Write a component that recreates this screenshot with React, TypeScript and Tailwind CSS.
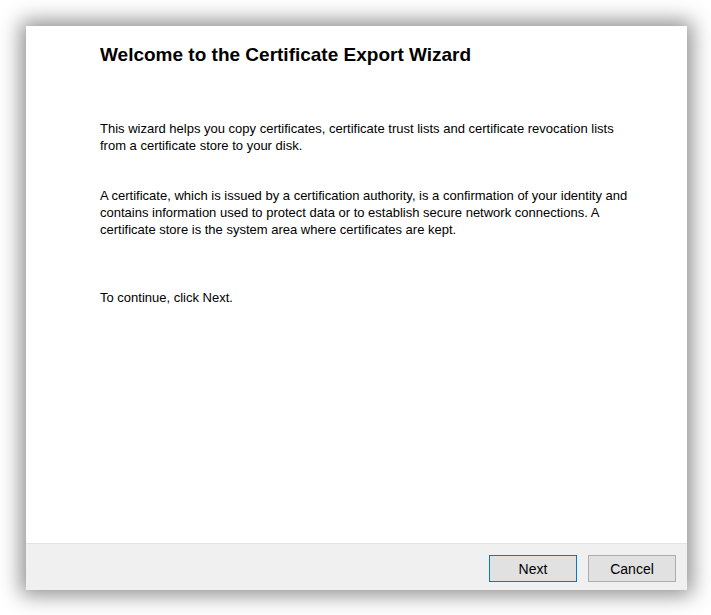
export default function App() {
  return (
    <div className="h-[615px] w-[711px] bg-white pl-[26px] pr-[24px] pt-[26px] pb-[25px]">
      <div className="flex h-full flex-col bg-white shadow-[0_0_20px_5px_rgba(0,0,0,0.45)] font-['Liberation_Sans',Arial,sans-serif] text-black">
        <div className="flex-1 pl-[74px] pr-[20px] pt-[17px]">
          <h1 className="text-[19px] font-bold leading-[24px]">
            Welcome to the Certificate Export Wizard
          </h1>
          <p className="mt-[53px] text-[13px] leading-[17px]">
            This wizard helps you copy certificates, certificate trust lists and certificate revocation lists
            <br />
            from a certificate store to your disk.
          </p>
          <p className="mt-[33px] text-[13px] leading-[17px]">
            A certificate, which is issued by a certification authority, is a confirmation of your identity and
            <br />
            contains information used to protect data or to establish secure network connections. A
            <br />
            certificate store is the system area where certificates are kept.
          </p>
          <p className="mt-[51px] text-[13px] leading-[17px]">To continue, click Next.</p>
        </div>
        <div className="flex h-[47px] items-start justify-end gap-[11px] border-t border-[#e3e3e3] bg-[#f0f0f0] pr-[11px] pt-[11px]">
          <button className="h-[27px] w-[88px] border border-[#0078d7] bg-[#e1e1e1] text-[14px] leading-none text-black">
            Next
          </button>
          <button className="h-[27px] w-[88px] border border-[#adadad] bg-[#e1e1e1] text-[14px] leading-none text-black">
            Cancel
          </button>
        </div>
      </div>
    </div>
  );
}
